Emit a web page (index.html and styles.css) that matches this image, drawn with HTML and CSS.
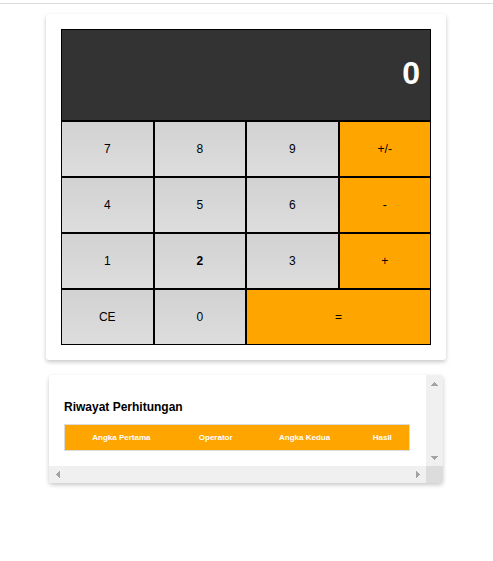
FILE: index.html
```html
<!DOCTYPE html>
<html lang="id">
<head>
<meta charset="utf-8">
<meta name="viewport" content="width=device-width, initial-scale=1">
<title>Kalkulator</title>
<link rel="stylesheet" href="styles.css">
</head>
<body>
<main class="page">
  <section class="card calculator">
    <div class="keypad">
      <output class="display">0</output>
      <button class="key">7</button>
      <button class="key">8</button>
      <button class="key">9</button>
      <button class="key key-operator">+/-</button>
      <button class="key">4</button>
      <button class="key">5</button>
      <button class="key">6</button>
      <button class="key key-operator">-</button>
      <button class="key">1</button>
      <button class="key key-active">2</button>
      <button class="key">3</button>
      <button class="key key-operator">+</button>
      <button class="key">CE</button>
      <button class="key">0</button>
      <button class="key key-operator key-wide">=</button>
    </div>
  </section>
  <section class="card history">
    <div class="history-body">
      <h2 class="history-title">Riwayat Perhitungan</h2>
      <table class="history-table">
        <thead>
          <tr><th>Angka Pertama</th><th>Operator</th><th>Angka Kedua</th><th>Hasil</th></tr>
        </thead>
      </table>
    </div>
    <div class="scrollbar scrollbar-vertical">
      <button class="arrow" aria-label="Gulir ke atas"><svg width="7" height="4" viewBox="0 0 7 4"><path d="M3 0h1v1h1v1h1v1h1v1H0V3h1V2h1V1h1z"/></svg></button>
      <button class="arrow" aria-label="Gulir ke bawah"><svg width="7" height="4" viewBox="0 0 7 4"><path d="M0 0h7v1H6v1H5v1H4v1H3V3H2V2H1V1H0z"/></svg></button>
    </div>
    <div class="scrollbar">
      <button class="arrow" aria-label="Gulir ke kiri"><svg width="4" height="7" viewBox="0 0 4 7"><path d="M4 0v7H3V6H2V5H1V4H0V3h1V2h1V1h1V0z"/></svg></button>
      <button class="arrow" aria-label="Gulir ke kanan"><svg width="4" height="7" viewBox="0 0 4 7"><path d="M0 0h1v1h1v1h1v1h1v1H3v1H2v1H1v1H0z"/></svg></button>
    </div>
    <div class="scroll-corner"></div>
  </section>
</main>
</body>
</html>
```
FILE: styles.css
```css
* {
  box-sizing: border-box;
}

body {
  margin: 0;
  padding-top: 3px;
  background: #fff;
  color: #000;
  font-family: Arial, "Liberation Sans", sans-serif;
}

.page {
  display: flex;
  flex-direction: column;
  align-items: center;
  gap: 15px;
  padding: 10px 9px 10px 8px;
  border-top: 1px solid #dcdcdc;
}

.card {
  width: 100%;
  background: #fff;
  border-radius: 3px;
  box-shadow: 0 2px 4px rgba(0, 0, 0, 0.22);
}

.calculator {
  max-width: 400px;
  padding: 15px;
}

.keypad {
  display: grid;
  grid-template-columns: repeat(4, 1fr);
  grid-template-rows: 92px;
  grid-auto-rows: 56px;
}

.display {
  grid-column: 1 / -1;
  display: flex;
  align-items: center;
  justify-content: flex-end;
  padding: 0 10px 3px;
  border: 1px solid #000;
  background: #333;
  color: #fff;
  font-size: 32px;
  font-weight: bold;
}

.key {
  padding: 0;
  border: 1px solid #000;
  border-radius: 0;
  background: linear-gradient(to bottom, #d2d2d2, #ddd);
  color: #000;
  font-family: inherit;
  font-size: 12px;
}

.key-operator {
  background: orange;
}

.key-active {
  font-weight: bold;
}

.key-wide {
  grid-column: span 2;
}

.history {
  max-width: 394px;
  display: grid;
  grid-template-columns: 1fr 17px;
  grid-template-rows: auto 17px;
  overflow: hidden;
}

.history-body {
  padding: 24px 16px 15px 15px;
}

.history-title {
  margin: 0 0 9px;
  font-size: 12px;
  line-height: 16px;
}

.history-table {
  width: 100%;
  border: 1px solid #dcdcdc;
  border-spacing: 0;
  background: orange;
  color: #fff;
  font-size: 8px;
  line-height: 9px;
}

.history-table th {
  padding: 8px;
}

.scrollbar {
  display: flex;
  justify-content: space-between;
  background: #f0f0f0;
}

.scrollbar-vertical {
  flex-direction: column;
}

.arrow {
  display: grid;
  place-items: center;
  width: 17px;
  height: 17px;
  padding: 0;
  border: 0;
  background: transparent;
  fill: #a3a3a3;
}

.scroll-corner {
  background: #dcdcdc;
}
```
